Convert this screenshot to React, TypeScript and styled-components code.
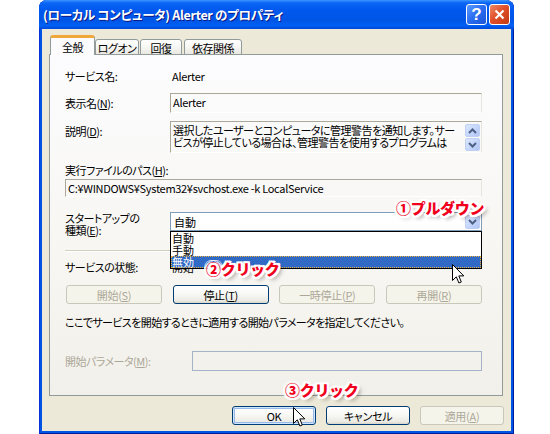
import React from "react";
import styled, { createGlobalStyle } from "styled-components";

const UI = `"Noto Sans CJK JP", "Noto Sans", sans-serif`;

const GlobalStyle = createGlobalStyle`
  html, body { margin: 0; padding: 0; background: #ffffff; }
  body { font-family: ${UI}; }
  #root { width: 550px; height: 434px; overflow: hidden; }
`;

const Page = styled.div`
  width: 550px;
  height: 434px;
  box-sizing: border-box;
  padding-left: 39px;
  display: flex;
  align-items: flex-start;
`;

const Window = styled.div`
  width: 475px;
  height: 434px;
  display: flex;
  flex-direction: column;
  border-radius: 8px 8px 0 0;
  overflow: hidden;
  background: #0054e3;
  box-shadow: inset 1px 0 0 #0831d9, inset -1px 0 0 #001ea0, inset 0 -1px 0 #001ea0;
`;

const TitleBar = styled.div`
  height: 29px;
  flex: none;
  display: flex;
  align-items: center;
  padding: 0 4px 0 4px;
  background: linear-gradient(
    to bottom,
    #3d95ff 0%,
    #0a66f5 10%,
    #0058ee 35%,
    #0055e5 70%,
    #0060f4 88%,
    #0048d8 100%
  );
`;

const TitleText = styled.div`
  flex: 1;
  color: #ffffff;
  font-family: ${UI};
  font-weight: 700;
  font-size: 12.5px;
  font-feature-settings: "palt";
  letter-spacing: -0.3px;
  text-shadow: 1px 1px 0 #0a1883;
  white-space: nowrap;
`;

const CaptionButton = styled.div<{ $kind: "help" | "close" }>`
  width: 21px;
  height: 21px;
  box-sizing: border-box;
  margin-left: 2px;
  border: 1px solid #ffffff;
  border-radius: 3px;
  display: flex;
  align-items: center;
  justify-content: center;
  color: #ffffff;
  font-family: "Liberation Sans", sans-serif;
  font-weight: 700;
  font-size: 17px;
  line-height: 1;
  background: ${(p) =>
    p.$kind === "help"
      ? "linear-gradient(135deg, #5b9bff 0%, #2a6cf0 50%, #1c55d8 100%)"
      : "linear-gradient(135deg, #f08a6a 0%, #e0502a 45%, #c23a14 100%)"};
`;

const Frame = styled.div`
  flex: 1;
  display: flex;
  padding: 0 3px 3px 3px;
`;

const Body = styled.div`
  flex: 1;
  background: #ece9d8;
  display: flex;
  flex-direction: column;
`;

const TabStrip = styled.div`
  display: flex;
  align-items: flex-end;
  height: 20px;
  margin: 6px 0 -1px 8px;
  position: relative;
  z-index: 1;
`;

const Tab = styled.div<{ $w: number; $active?: boolean; $ml?: number }>`
  width: ${(p) => p.$w}px;
  margin-left: ${(p) => p.$ml ?? 0}px;
  height: ${(p) => (p.$active ? 20 : 16)}px;
  box-sizing: border-box;
  display: flex;
  align-items: center;
  justify-content: center;
  font-size: 11px;
  letter-spacing: -0.5px;
  white-space: nowrap;
  font-feature-settings: "palt";
  color: #000;
  border: 1px solid #919b9c;
  border-bottom: ${(p) => (p.$active ? "none" : "1px solid #919b9c")};
  border-radius: 3px 3px 0 0;
  background: ${(p) =>
    p.$active ? "#fcfcfe" : "linear-gradient(#ffffff 0%, #f6f6f3 50%, #e9e8e1 100%)"};
  border-top: ${(p) => (p.$active ? "3px solid #f1a83a" : "1px solid #919b9c")};
  padding-top: ${(p) => (p.$active ? "0" : "1px")};
`;

const Panel = styled.div`
  margin-left: 7px;
  width: 454px;
  height: 342px;
  box-sizing: border-box;
  border: 1px solid #919b9c;
  background: linear-gradient(#fcfcfe 0%, #f7f6f2 60%, #f2f0ea 100%);
  padding: 0 20px 0 15px;
  display: flex;
  flex-direction: column;
`;

const Row = styled.div<{ $mt: number; $h: number; $cols?: string; $align?: string }>`
  display: grid;
  grid-template-columns: ${(p) => p.$cols ?? "105px 312px"};
  margin-top: ${(p) => p.$mt}px;
  height: ${(p) => p.$h}px;
  align-items: ${(p) => p.$align ?? "center"};
`;

const Label = styled.div<{ $disabled?: boolean; $pt?: number }>`
  font-size: 11px;
  letter-spacing: -0.5px;
  line-height: 14px;
  font-feature-settings: "palt";
  color: ${(p) => (p.$disabled ? "#aca899" : "#000")};
  white-space: nowrap;
  padding-top: ${(p) => p.$pt ?? 0}px;
`;

const TwoLineLabel = styled(Label)`
  line-height: 12px;
  align-self: start;
`;

const Value = styled.div`
  font-size: 11px;
  letter-spacing: -0.3px;
  line-height: 14px;
  font-feature-settings: "palt";
  padding-left: 2px;
  white-space: nowrap;
  position: relative;
`;

const StaticBox = styled.div<{ $h: number }>`
  height: ${(p) => p.$h}px;
  box-sizing: border-box;
  border-top: 1px solid #aca899;
  border-left: 1px solid #aca899;
  border-right: 1px solid #e8e6dc;
  border-bottom: 1px solid #ffffff;
  font-size: 11px;
  letter-spacing: -0.3px;
  line-height: 14px;
  font-feature-settings: "palt";
  padding: 1px 2px;
  white-space: nowrap;
  overflow: hidden;
`;

const DescBox = styled(StaticBox)`
  display: flex;
  padding: 1px 1px 1px 2px;
`;

const DescText = styled.div`
  flex: 1;
  font-size: 11px;
  line-height: 11.5px;
  letter-spacing: -0.5px;
  padding-top: 2px;
  overflow: hidden;
`;

const ScrollCol = styled.div`
  width: 15px;
  display: flex;
  flex-direction: column;
  gap: 1px;
  padding-top: 1px;
`;

const ArrowBtn = styled.div`
  width: 15px;
  height: 14px;
  box-sizing: border-box;
  border: 1px solid #bfd0f4;
  border-radius: 2px;
  background: linear-gradient(135deg, #dce7fd 0%, #c3d5fb 55%, #b1c6f4 100%);
  display: flex;
  align-items: center;
  justify-content: center;
`;

const Chevron = ({ up }: { up?: boolean }) => (
  <svg width="9" height="6" viewBox="0 0 9 6">
    <path
      d={up ? "M1 5 L4.5 1.5 L8 5" : "M1 1 L4.5 4.5 L8 1"}
      fill="none"
      stroke="#4d6185"
      strokeWidth="2"
    />
  </svg>
);

const ComboWrap = styled.div`
  position: relative;
  align-self: start;
`;

const Combo = styled.div`
  height: 19px;
  box-sizing: border-box;
  border: 1px solid #7f9db9;
  background: #ffffff;
  display: flex;
  align-items: center;
  justify-content: space-between;
  padding: 0 1px 0 3px;
  font-size: 11px;
  font-feature-settings: "palt";
`;

const DropList = styled.div`
  position: absolute;
  left: 0;
  top: 19px;
  width: 312px;
  box-sizing: border-box;
  border: 1px solid #000;
  background: #ffffff;
  z-index: 3;
`;

const DropItem = styled.div<{ $sel?: boolean }>`
  height: 12px;
  box-sizing: border-box;
  font-size: 11px;
  line-height: 12px;
  padding-left: 1px;
  color: ${(p) => (p.$sel ? "#ffffff" : "#000")};
  background: ${(p) => (p.$sel ? "#316ac5" : "transparent")};
  outline: ${(p) => (p.$sel ? "1px dotted #e8b040" : "none")};
  outline-offset: -1px;
`;

const Separator = styled.div<{ $mt: number }>`
  margin-top: ${(p) => p.$mt}px;
  width: 417px;
  height: 2px;
  border-top: 1px solid #d0d0bf;
  border-bottom: 1px solid #ffffff;
  box-sizing: border-box;
`;

const ButtonRow = styled.div<{ $mt: number }>`
  margin-top: ${(p) => p.$mt}px;
  width: 416px;
  margin-left: 1px;
  display: flex;
  justify-content: space-between;
`;

const Btn = styled.button<{ $w: number; $default?: boolean }>`
  width: ${(p) => p.$w}px;
  height: 19px;
  box-sizing: border-box;
  padding: 0;
  margin: 0;
  position: relative;
  border: 1px solid ${(p) => (p.disabled ? "#c9c7ba" : "#003c74")};
  border-radius: 3px;
  background: ${(p) =>
    p.disabled
      ? "#f5f4ea"
      : "linear-gradient(#ffffff 0%, #f8f8f5 45%, #ecebe5 85%, #d8d5c8 100%)"};
  color: ${(p) => (p.disabled ? "#aca899" : "#000")};
  font-family: ${UI};
  font-size: 11px;
  letter-spacing: -0.3px;
  line-height: 16px;
  font-feature-settings: "palt";
  box-shadow: ${(p) =>
    p.$default ? "inset 0 0 0 1px #cee7ff, inset 0 0 0 2px #98b8ea" : "none"};
  cursor: default;
`;

const Para = styled.div<{ $mt: number }>`
  margin-top: ${(p) => p.$mt}px;
  font-size: 11px;
  letter-spacing: -0.6px;
  line-height: 14px;
  font-feature-settings: "palt";
  white-space: nowrap;
`;

const Input = styled.div`
  height: 20px;
  box-sizing: border-box;
  border: 1px solid #a5b3c8;
  background: transparent;
`;

const Footer = styled.div`
  display: flex;
  justify-content: flex-end;
  gap: 10px;
  margin-top: 10px;
  padding-right: 7px;
`;

const Note = styled.div<{ $left: number; $top: number }>`
  position: absolute;
  left: ${(p) => p.$left}px;
  top: ${(p) => p.$top}px;
  z-index: 5;
  font-family: ${UI};
  font-weight: 900;
  font-size: 15px;
  line-height: 18px;
  color: #f0001c;
  white-space: nowrap;
  letter-spacing: -0.3px;
  text-shadow: 2px 0 0 #fff, -2px 0 0 #fff, 0 2px 0 #fff, 0 -2px 0 #fff,
    2px 2px 0 #fff, -2px -2px 0 #fff, 2px -2px 0 #fff, -2px 2px 0 #fff,
    1px 2px 0 #fff, 2px 1px 0 #fff, -1px 2px 0 #fff, -2px 1px 0 #fff,
    3px 3px 4px rgba(0, 0, 0, 0.45);
`;

const CursorBox = styled.div<{ $left: number; $top: number }>`
  position: absolute;
  left: ${(p) => p.$left}px;
  top: ${(p) => p.$top}px;
  z-index: 6;
  width: 13px;
  height: 21px;
`;

const Cursor = ({ left, top }: { left: number; top: number }) => (
  <CursorBox $left={left} $top={top}>
    <svg width="13" height="21" viewBox="0 0 13 21">
      <path
        d="M0.5 0.5 L0.5 16.5 L4.3 12.8 L6.9 19 L9.3 18 L6.8 11.9 L11.8 11.9 Z"
        fill="#ffffff"
        stroke="#000000"
        strokeWidth="1"
        strokeLinejoin="miter"
      />
    </svg>
  </CursorBox>
);

const BtnAnchor = styled.div`
  position: relative;
  display: flex;
`;

export default function App() {
  return (
    <>
      <GlobalStyle />
      <Page>
        <Window>
          <TitleBar>
            <TitleText>(ローカル コンピュータ) Alerter のプロパティ</TitleText>
            <CaptionButton $kind="help">?</CaptionButton>
            <CaptionButton $kind="close">
              <svg width="11" height="11" viewBox="0 0 11 11">
                <path d="M1.5 1.5 L9.5 9.5 M9.5 1.5 L1.5 9.5" stroke="#fff" strokeWidth="2.2" />
              </svg>
            </CaptionButton>
          </TitleBar>
          <Frame>
            <Body>
              <TabStrip>
                <Tab $w={45} $active>
                  全般
                </Tab>
                <Tab $w={44}>ログオン</Tab>
                <Tab $w={42} $ml={1}>
                  回復
                </Tab>
                <Tab $w={58} $ml={2}>
                  依存関係
                </Tab>
              </TabStrip>
              <Panel>
                <Row $mt={14} $h={14}>
                  <Label>サービス名:</Label>
                  <Value>Alerter</Value>
                </Row>
                <Row $mt={10} $h={20}>
                  <Label>
                    表示名(<u>N</u>):
                  </Label>
                  <StaticBox $h={20}>Alerter</StaticBox>
                </Row>
                <Row $mt={8} $h={32} $align="start">
                  <Label $pt={3}>
                    説明(<u>D</u>):
                  </Label>
                  <DescBox $h={32}>
                    <DescText>
                      選択したユーザーとコンピュータに管理警告を通知します。サー
                      <br />
                      ビスが停止している場合は、管理警告を使用するプログラムは
                    </DescText>
                    <ScrollCol>
                      <ArrowBtn>
                        <Chevron up />
                      </ArrowBtn>
                      <ArrowBtn>
                        <Chevron />
                      </ArrowBtn>
                    </ScrollCol>
                  </DescBox>
                </Row>
                <Row $mt={10} $h={14} $cols="417px">
                  <Label>
                    実行ファイルのパス(<u>H</u>):
                  </Label>
                </Row>
                <Row $mt={2} $h={18} $cols="417px">
                  <StaticBox $h={18}>C:¥WINDOWS¥System32¥svchost.exe -k LocalService</StaticBox>
                </Row>
                <Row $mt={15} $h={20} $align="start">
                  <TwoLineLabel>
                    スタートアップの
                    <br />
                    種類(<u>E</u>):
                  </TwoLineLabel>
                  <ComboWrap>
                    <Combo>
                      <span>自動</span>
                      <ArrowBtn>
                        <Chevron />
                      </ArrowBtn>
                    </Combo>
                    <DropList>
                      <DropItem>自動</DropItem>
                      <DropItem>手動</DropItem>
                      <DropItem $sel>無効</DropItem>
                    </DropList>
                    <Note $left={226} $top={-13}>
                      ①プルダウン
                    </Note>
                    <Note $left={36} $top={48}>
                      ②クリック
                    </Note>
                    <Cursor left={282} top={52} />
                  </ComboWrap>
                </Row>
                <Separator $mt={18} />
                <Row $mt={8} $h={14}>
                  <Label>サービスの状態:</Label>
                  <Value>開始</Value>
                </Row>
                <ButtonRow $mt={11}>
                  <Btn $w={96} disabled>
                    開始(<u>S</u>)
                  </Btn>
                  <Btn $w={96}>
                    停止(<u>T</u>)
                  </Btn>
                  <Btn $w={96} disabled>
                    一時停止(<u>P</u>)
                  </Btn>
                  <Btn $w={96} disabled>
                    再開(<u>R</u>)
                  </Btn>
                </ButtonRow>
                <Para $mt={11}>
                  ここでサービスを開始するときに適用する開始パラメータを指定してください。
                </Para>
                <Row $mt={22} $h={20} $cols="127px 290px">
                  <Label $disabled>
                    開始パラメータ(<u>M</u>):
                  </Label>
                  <Input />
                </Row>
              </Panel>
              <Footer>
                <BtnAnchor>
                  <Btn $w={84} $default>
                    OK
                  </Btn>
                  <Note $left={53} $top={-25}>
                    ③クリック
                  </Note>
                  <Cursor left={61} top={1} />
                </BtnAnchor>
                <Btn $w={84}>キャンセル</Btn>
                <Btn $w={84} disabled>
                  適用(<u>A</u>)
                </Btn>
              </Footer>
            </Body>
          </Frame>
        </Window>
      </Page>
    </>
  );
}
